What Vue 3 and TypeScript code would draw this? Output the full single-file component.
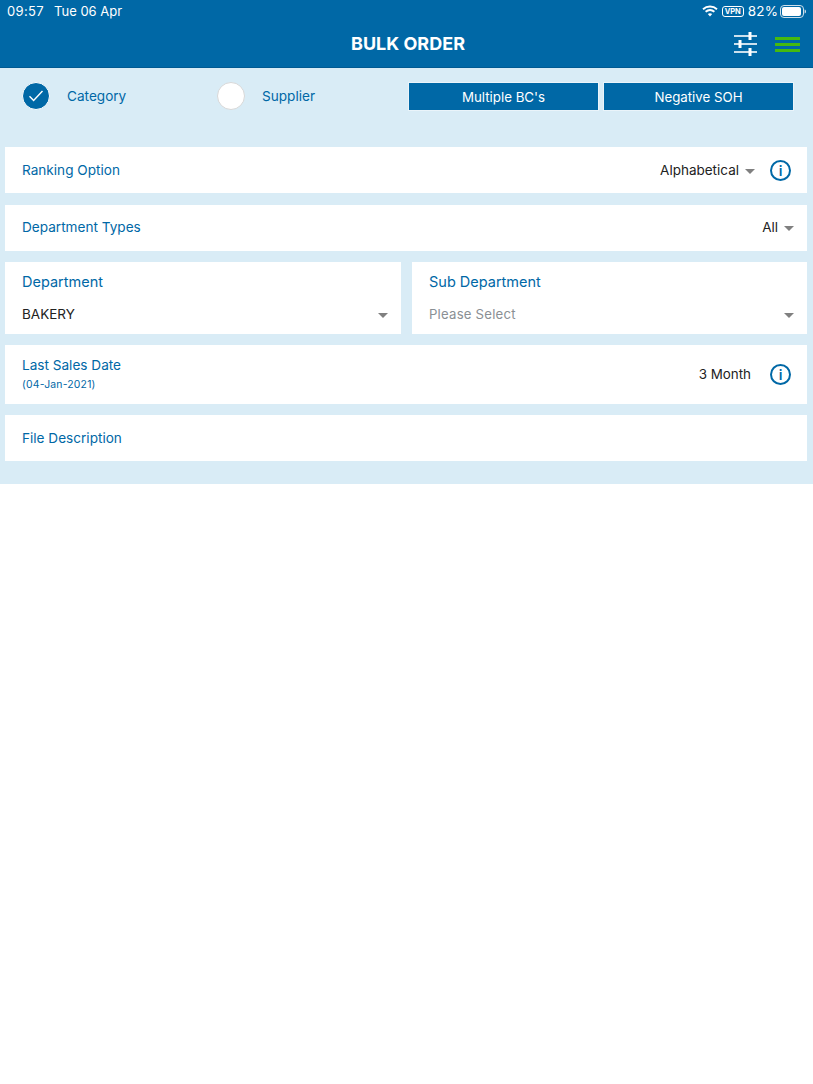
<script setup lang="ts">
const tools: { y: number; x: number }[] = [
  { y: 4, x: 16 },
  { y: 12, x: 6 },
  { y: 20, x: 16 },
]
</script>

<template>
  <div class="page">
    <header class="header">
      <div class="status">
        <div class="status-left"><span class="time">09:57</span><span>Tue 06 Apr</span></div>
        <div class="status-right">
          <svg class="wifi" width="16" height="12" viewBox="0 0 16 12">
            <path d="M1 4.2C5 .6 11 .6 15 4.2" fill="none" stroke="#fff" stroke-width="1.9" />
            <path d="M3.6 6.8c2.6-2.2 6.2-2.2 8.8 0" fill="none" stroke="#fff" stroke-width="1.9" />
            <path d="M8 11.4 5.8 9c1.3-1 3.1-1 4.4 0z" fill="#fff" />
          </svg>
          <span class="vpn">VPN</span>
          <span class="pct">82%</span>
          <svg class="battery" width="26" height="13" viewBox="0 0 26 13">
            <rect x=".5" y=".5" width="23" height="12" rx="3.5" fill="none" stroke="#cfe0ec" />
            <rect x="2" y="2" width="19" height="9" rx="2" fill="#fff" />
            <path d="M24.6 4.5c1 .3 1.4 1.1 1.4 2s-.4 1.7-1.4 2z" fill="#cfe0ec" />
          </svg>
        </div>
      </div>
      <div class="titlebar">
        <h1 class="title">BULK ORDER</h1>
        <div class="actions">
          <svg width="24" height="24" viewBox="0 0 24 24">
            <g v-for="t in tools" :key="t.y">
              <path :d="`M0 ${t.y}H23`" stroke="#fff" stroke-width="1.6" />
              <rect :x="t.x - 1.5" :y="t.y - 4" width="3" height="8" fill="#fff" />
            </g>
          </svg>
          <div class="menu"><i></i><i></i><i></i></div>
        </div>
      </div>
    </header>

    <main class="panel">
      <div class="options">
        <div class="radios">
          <div class="radio-item first">
            <span class="radio on">
              <svg width="16" height="12" viewBox="0 0 16 12">
                <path d="M1.5 6.3 5.6 10.4 14.5 1" fill="none" stroke="#fff" stroke-width="1.4" />
              </svg>
            </span>
            <span class="label">Category</span>
          </div>
          <div class="radio-item">
            <span class="radio"></span>
            <span class="label">Supplier</span>
          </div>
        </div>
        <div class="buttons">
          <button class="btn" type="button">Multiple BC's</button>
          <button class="btn" type="button">Negative SOH</button>
        </div>
      </div>

      <div class="rows">
        <section class="row h46 first-row">
          <span class="label">Ranking Option</span>
          <div class="value-wrap">
            <span class="value">Alphabetical</span>
            <span class="caret"></span>
            <span class="info wide">i</span>
          </div>
        </section>

        <section class="row h46 raised">
          <span class="label">Department Types</span>
          <div class="value-wrap tight">
            <span class="value">All</span>
            <span class="caret"></span>
          </div>
        </section>

        <div class="split">
          <section class="cell">
            <span class="label big">Department</span>
            <div class="select"><span class="value">BAKERY</span><span class="caret"></span></div>
          </section>
          <section class="cell">
            <span class="label big">Sub Department</span>
            <div class="select"><span class="placeholder">Please Select</span><span class="caret"></span></div>
          </section>
        </div>

        <section class="row h59">
          <div class="stack">
            <span class="label">Last Sales Date</span>
            <span class="sub">(04-Jan-2021)</span>
          </div>
          <div class="value-wrap">
            <span class="value month">3 Month</span>
            <span class="info">i</span>
          </div>
        </section>

        <section class="row h46">
          <span class="label">File Description</span>
        </section>
      </div>
    </main>
  </div>
</template>

<style>
html, body { margin: 0; background: #fff; }
</style>

<style scoped>
.page {
  width: 813px;
  height: 1084px;
  background: #fff;
  font-family: Inter, "Liberation Sans", sans-serif;
  overflow: hidden;
}
.header {
  height: 68px;
  box-sizing: border-box;
  background: #0068a6;
  border-bottom: 1px solid #005a92;
  color: #fff;
}
.status {
  height: 22px;
  padding: 0 7px 0 7px;
  display: flex;
  align-items: center;
  justify-content: space-between;
  font-size: 13px;
}
.status-left { display: flex; gap: 10px; }
.time { letter-spacing: .35px; }
.status-right { display: flex; align-items: center; gap: 4px; }
.battery { margin-left: -2px; }
.vpn {
  font-size: 7.5px;
  font-weight: 700;
  line-height: 9px;
  padding: 0 2px;
  border: 1px solid #fff;
  border-radius: 3px;
}
.pct { font-size: 13.5px; letter-spacing: .1px; }
.titlebar {
  height: 45px;
  padding-left: 3px;
  display: flex;
  align-items: center;
  justify-content: center;
  position: relative;
}
.title { margin: 0; font-size: 18px; font-weight: 700; line-height: 1; transform: translateY(-1px); }
.actions {
  position: absolute;
  right: 13px;
  top: 10px;
  display: flex;
  align-items: center;
  gap: 17px;
}
.menu { display: flex; flex-direction: column; gap: 3.5px; width: 25px; margin-top: 1px; }
.menu i { height: 2.5px; background: #46b90f; display: block; }

.panel { height: 416px; background: #d9ecf6; box-sizing: border-box; }
.options {
  height: 79px;
  padding: 14px 19px 0 22px;
  box-sizing: border-box;
  display: flex;
  justify-content: space-between;
}
.radios { display: flex; height: 28px; }
.radio-item { display: flex; align-items: center; gap: 17px; }
.radio-item.first { width: 195px; }
.radio {
  width: 28px;
  height: 28px;
  box-sizing: border-box;
  border-radius: 50%;
  background: #fff;
  border: 1px solid #d8d8d8;
  display: flex;
  align-items: center;
  justify-content: center;
}
.radio.on { background: #0068a6; border-color: #fff; }
.label { color: #0068a6; font-size: 13.6px; line-height: 17px; }
.label.big { font-size: 14.5px; }
.buttons { display: flex; gap: 4px; }
.btn {
  width: 191px;
  height: 29px;
  padding: 0;
  border: 1px solid #eaf4fa;
  background: #0068a6;
  color: #fff;
  font: 13.3px Inter, "Liberation Sans", sans-serif;
}
.rows {
  padding: 0 6px 0 5px;
  display: flex;
  flex-direction: column;
  gap: 11px;
}
.first-row { margin-bottom: 1px; }
.row {
  background: #fff;
  display: flex;
  align-items: center;
  justify-content: space-between;
  box-sizing: border-box;
  padding: 0 16px 0 17px;
}
.raised { padding-bottom: 1px; }
.h46 { height: 46px; }
.h59 { height: 59px; }
.value-wrap { display: flex; align-items: center; }
.value-wrap.tight { margin-right: -3px; }
.value { color: #222; font-size: 13.5px; line-height: 17px; }
.caret {
  width: 0;
  height: 0;
  margin-left: 6px;
  margin-top: 2px;
  border-left: 5px solid transparent;
  border-right: 5px solid transparent;
  border-top: 5px solid #808080;
}
.info {
  margin-left: 14px;
  width: 21px;
  height: 21px;
  box-sizing: border-box;
  border: 2px solid #0068a6;
  border-radius: 50%;
  color: #0068a6;
  font-size: 14px;
  font-weight: 600;
  line-height: 17px;
  text-align: center;
}
.info.wide { margin-left: 15px; }
.month { margin-right: 5px; font-size: 13.4px; }
.split { display: grid; grid-template-columns: 396px 395px; gap: 11px; }
.cell {
  height: 72px;
  background: #fff;
  box-sizing: border-box;
  padding: 11px 13px 0 17px;
  display: flex;
  flex-direction: column;
  gap: 16px;
}
.select { display: flex; align-items: center; justify-content: space-between; }
.placeholder { color: #8a8f94; font-size: 13.2px; line-height: 17px; letter-spacing: .2px; }
.stack { display: flex; flex-direction: column; gap: 5px; margin-bottom: 1px; }
.sub { color: #0068a6; font-size: 10.4px; line-height: 12px; letter-spacing: .2px; }
</style>
